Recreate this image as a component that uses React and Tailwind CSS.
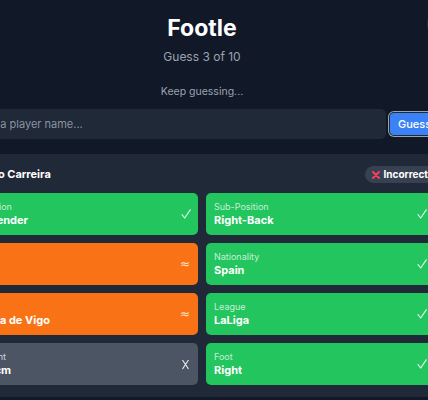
import React from "react";

const cells = [
    { label: "Position", value: "Defender", state: "hit" },
    { label: "Sub-Position", value: "Right-Back", state: "hit" },
    { label: "Age", value: "27", state: "near" },
    { label: "Nationality", value: "Spain", state: "hit" },
    { label: "Club", value: "Celta de Vigo", state: "near" },
    { label: "League", value: "LaLiga", state: "hit" },
    { label: "Height", value: "181cm", state: "miss" },
    { label: "Foot", value: "Right", state: "hit" },
];

const bgs = {
    hit: "bg-[#22c55e]",
    near: "bg-[#f97316]",
    miss: "bg-[#4b5563]",
};

function Mark({ state }) {
    if (state === "near") {
        return <span className="text-[12px] leading-none text-white/80 font-['DejaVu_Sans',sans-serif] mr-[1px]">≈</span>;
    }
    if (state === "miss") {
        return (
            <svg width="9" height="11" viewBox="0 0 9 11" className="mr-[1px]">
                <path d="M1.5 1 L7.5 10 M7.5 1 L1.5 10" stroke="rgba(255,255,255,0.85)" strokeWidth="1.2" fill="none" />
            </svg>
        );
    }
    return (
        <svg width="10" height="10" viewBox="0 0 10 10">
            <path d="M1 5.6 L3.7 9 L9.2 0.8" stroke="rgba(255,255,255,0.85)" strokeWidth="1.2" fill="none" strokeLinecap="round" strokeLinejoin="round" />
        </svg>
    );
}

function Cell({ label, value, state }) {
    return (
        <div className={`${bgs[state]} h-[42px] rounded-[5px] pl-2 pr-[7px] flex items-center justify-between`}>
            <div className="flex flex-col leading-none">
                <span className="text-[9px] text-white/75 mb-[4px]">{label}</span>
                <span className="text-[11px] font-bold text-white">{value}</span>
            </div>
            <Mark state={state} />
        </div>
    );
}

export default function App() {
    return (
        <div className="w-full h-[400px] overflow-hidden bg-[#111827] font-['Inter',sans-serif]">
            <div className="w-[488px] ml-[-42px]">
                {/* Header */}
                <div className="relative text-center pt-[13px]">
                    <h1 className="text-[23px] leading-[30px] font-bold text-white">Footle</h1>
                    <p className="text-[12px] leading-[16px] text-[#9ca3af] mt-[6px]">Guess 3 of 10</p>
                    <div className="absolute right-[-9px] top-[10px] w-[28px] h-[28px] rounded-full bg-[#252e3e]" />
                </div>

                <p className="text-center text-[10.5px] leading-[14px] text-[#9ca3af] mt-[20px]">Keep guessing...</p>

                {/* Input row */}
                <div className="flex items-center mt-[10px] h-[30px]">
                    <input
                        className="flex-1 h-[30px] bg-[#1f2937] rounded-[5px] px-3 text-[11px] text-white placeholder:text-[#8b93a1] outline-none"
                        placeholder="Enter a player name..."
                    />
                    <button className="ml-[4px] h-[22px] w-[54px] mr-[2px] rounded-[4px] bg-[#3b82f6] text-white text-[11px] font-medium text-left pl-2 ring-1 ring-[#9ca3af] ring-offset-1 ring-offset-[#1f2937]">
                        Guess
                    </button>
                </div>

                {/* Guess card */}
                <div className="mt-[15px] bg-[#1f2937] rounded-[6px] p-3">
                    <div className="flex items-center justify-between h-[17px] mb-[10px]">
                        <span className="text-[11px] font-bold text-white">Sergio Carreira</span>
                        <span className="h-[17px] rounded-full bg-[#374151] pl-[7px] pr-[6px] flex items-center gap-[3px]">
                            <svg width="8" height="8" viewBox="0 0 8 8">
                                <path d="M1 1 L7 7 M7 1 L1 7" stroke="#f43f5e" strokeWidth="2" strokeLinecap="round" fill="none" />
                            </svg>
                            <span className="text-[10px] font-bold text-white">Incorrect</span>
                        </span>
                    </div>
                    <div className="grid grid-cols-2 gap-2">
                        {cells.map((c, i) => (
                            <Cell key={i} {...c} />
                        ))}
                    </div>
                </div>
            </div>
        </div>
    );
}
